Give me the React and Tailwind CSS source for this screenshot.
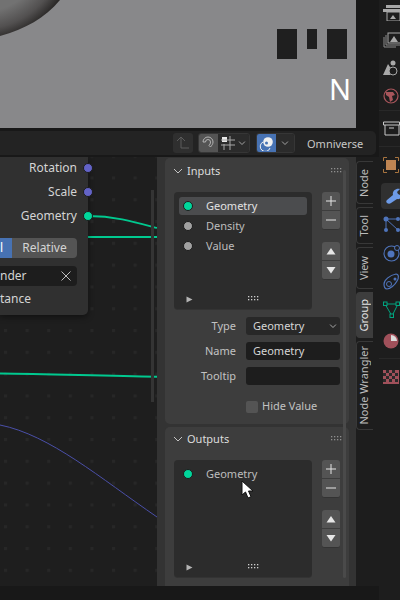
import React from 'react';

const font = { fontFamily: '"Noto Sans", sans-serif' };

// small up-chevron style arrow, used on panel headers and dropdowns
const Chevron = ({ className = '' }) => (
  <svg width="10" height="6" viewBox="0 0 10 6" className={className}>
    <path d="M1 1l4 4 4-4" fill="none" stroke="currentColor" strokeWidth="1" />
  </svg>
);

const Grip = ({ cols = 4, rows = 2, color = '#b5b5b5' }) => (
  <svg width={cols * 3} height={rows * 3} viewBox={`0 0 ${cols * 3} ${rows * 3}`}>
    {Array.from({ length: cols * rows }).map((_, i) => (
      <rect key={i} x={(i % cols) * 3} y={Math.floor(i / cols) * 3} width="1.3" height="1.3" fill={color} />
    ))}
  </svg>
);

const Dot = ({ color }) => (
  <div className="w-[8px] h-[8px] rounded-full border border-[#1c1c1c] shrink-0 box-content" style={{ background: color }} />
);

const ListRow = ({ color, label, active }) => (
  <div className={`flex items-center h-[18px] pl-[4px] rounded-[3px] ${active ? 'bg-[#4b4c4e] text-[#e2e2e2]' : 'text-[#bdbdbd]'}`}>
    <Dot color={color} />
    <span className="ml-[13px] pb-[2px]">{label}</span>
  </div>
);

const SideButtons = () => (
  <div className="flex flex-col w-[18px] ml-[10px]">
    <div className="h-[18px] bg-[#545454] rounded-t-[3px] flex items-center justify-center mb-[1px]">
      <svg width="10" height="10" viewBox="0 0 10 10"><path d="M5 0v10M0 5h10" stroke="#e6e6e6" /></svg>
    </div>
    <div className="h-[19px] bg-[#545454] rounded-b-[3px] flex items-center justify-center border-b border-[#333]">
      <svg width="10" height="10" viewBox="0 0 10 10"><path d="M0 5h10" stroke="#e6e6e6" /></svg>
    </div>
    <div className="h-[18px] bg-[#545454] rounded-t-[3px] flex items-center justify-center mt-[12px] mb-[1px]">
      <svg width="10" height="7" viewBox="0 0 10 7"><path d="M5 0l4.500 6.500h-9z" fill="#e6e6e6" /></svg>
    </div>
    <div className="h-[19px] bg-[#545454] rounded-b-[3px] flex items-center justify-center border-b border-[#333]">
      <svg width="10" height="7" viewBox="0 0 10 7"><path d="M5 6.500l4.500-6.500h-9z" fill="#e6e6e6" /></svg>
    </div>
  </div>
);

const ListBox = ({ children }) => (
  <div className="flex">
    <div className="w-[138px] h-[118px] bg-[#2c2c2c] rounded-[4px] border-b border-[#333] px-[5px] pt-[5px] flex flex-col relative">
      <div className="flex-1 flex flex-col gap-[2px]">{children}</div>
      <div className="flex items-center h-[14px] mb-[3px] pl-[7px]">
        <svg width="7" height="7" viewBox="0 0 7 7"><path d="M0.500 0.500v6l6-3z" fill="#b4b4b4" /></svg>
        <div className="ml-[55px]"><Grip color="#cfcfcf" /></div>
      </div>
    </div>
    <SideButtons />
  </div>
);

const PanelHead = ({ label, h = 26 }) => (
  <div className="flex items-center pl-[8px] pr-[6px] text-[#dcdcdc]" style={{ height: h }}>
    <Chevron className="text-[#c4c4c4]" />
    <span className="ml-[4px] flex-1 pb-[2px]">{label}</span>
    <Grip cols={4} rows={2} color="#8f8f8f" />
  </div>
);

const FieldRow = ({ label, value, bg = 'bg-[#1d1d1d]', arrow }) => (
  <div className="flex items-center h-[18px]">
    <div className="w-[71px] text-right text-[#c2c2c2] pb-[2px]">{label}</div>
    <div className={`ml-[10px] w-[94px] h-[18px] rounded-[3px] ${bg} flex items-center pl-[7px] pr-[2px] text-[#d6d6d6]`}>
      <span className="flex-1 pb-[2px]">{value}</span>
      {arrow && <Chevron className="text-[#d0d0d0] scale-75" />}
    </div>
  </div>
);

const Tab = ({ label, h, active }) => (
  <div
    className={`w-[17px] flex items-center justify-center pr-[3px] rounded-l-[4px] border border-r-0 ${active ? 'bg-[#3d3d3d] border-[#3d3d3d] text-[#e4e4e4]' : 'bg-[#1d1d1d] border-[#383838] text-[#bcbcbc]'}`}
    style={{ height: h }}
  >
    <span className="[writing-mode:vertical-rl] rotate-180 whitespace-nowrap">{label}</span>
  </div>
);

const NodeEditorCanvas = () => (
  <div className="relative flex-1 bg-[#1e1e1e] overflow-hidden">
    <svg width="157" height="429" viewBox="0 157 157 429" className="absolute inset-0">
      <defs>
        <pattern id="grid" x="4" y="2" width="21.6" height="21.8" patternUnits="userSpaceOnUse">
          <rect width="3" height="3" fill="#272727" />
        </pattern>
      </defs>
      <rect x="0" y="157" width="157" height="429" fill="url(#grid)" />
      <path d="M88 216C115 216 135 222 157 228" fill="none" stroke="#00c98f" strokeWidth="1.800" />
      <path d="M88 237H157" fill="none" stroke="#00c98f" strokeWidth="1.800" />
      <path d="M0 373.500C50 374 100 376 157 376.800" fill="none" stroke="#00c98f" strokeWidth="2" />
      <path d="M0 425C50 435 100 478 157 517" fill="none" stroke="#4a4fa8" strokeWidth="1" />
      <rect x="151" y="190" width="3" height="212" fill="#343434" />
    </svg>

    {/* node sits over the canvas */}
    <div className="absolute left-0 top-0 w-[88px] h-[158px] bg-[#303030] rounded-br-[5px] text-[12px] text-[#d4d4d4] shadow-[0_2px_6px_rgba(0,0,0,0.45)]">
      <div className="absolute right-[11px] top-[3px] leading-[16px]">Rotation</div>
      <div className="absolute right-[11px] top-[27px] leading-[16px]">Scale</div>
      <div className="absolute right-[11px] top-[51px] leading-[16px]">Geometry</div>
      <div className="absolute left-[0px] top-[81px] flex h-[20px] w-[77px] rounded-r-[4px] overflow-hidden">
        <div className="w-[12px] bg-[#4772b3] text-white flex items-center">l</div>
        <div className="flex-1 bg-[#545454] flex items-center justify-center">Relative</div>
      </div>
      <div className="absolute left-0 top-[109px] w-[77px] h-[20px] bg-[#1d1d1d] rounded-r-[4px] flex items-center justify-between pr-[6px]">
        <span>nder</span>
        <svg width="10" height="10" viewBox="0 0 10 10"><path d="M0.500 0.500l9 9M9.500 0.500l-9 9" stroke="#bdbdbd" /></svg>
      </div>
      <div className="absolute left-0 top-[134px] leading-[16px]">tance</div>
    </div>
    <div className="absolute left-[83px] top-[6px] w-[8px] h-[8px] rounded-full bg-[#6363c7] border border-[#1c1c1c] box-content" />
    <div className="absolute left-[83px] top-[30px] w-[8px] h-[8px] rounded-full bg-[#6363c7] border border-[#1c1c1c] box-content" />
    <div className="absolute left-[83px] top-[54px] w-[8px] h-[8px] rounded-full bg-[#00d69b] border border-[#1c1c1c] box-content" />

    {/* cursor is drawn over the sidebar, see App */}
  </div>
);

const Sidebar = () => (
  <div className="w-[199px] flex bg-[#333333]">
    <div className="w-[192px] pl-[8px] flex flex-col gap-[3px] pt-[1px]">
      <div className="w-[184px] h-[266px] bg-[#3d3d3d] rounded-[5px] flex flex-col">
        <PanelHead label="Inputs" />
        <div className="pl-[9px] pt-[8px]">
          <ListBox>
            <ListRow color="#00d69b" label="Geometry" active />
            <ListRow color="#a1a1a1" label="Density" />
            <ListRow color="#a1a1a1" label="Value" />
          </ListBox>
        </div>
        <div className="flex flex-col gap-[7px] pt-[7px]">
          <FieldRow label="Type" value="Geometry" bg="bg-[#282828]" arrow />
          <FieldRow label="Name" value="Geometry" />
          <FieldRow label="Tooltip" value="" />
        </div>
        <div className="flex items-center pl-[81px] pt-[15px] text-[#c2c2c2]">
          <div className="w-[12px] h-[12px] bg-[#545454] rounded-[2px]" />
          <span className="ml-[4px] pb-[2px]">Hide Value</span>
        </div>
      </div>
      <div className="w-[184px] h-[159px] bg-[#3d3d3d] rounded-t-[5px] flex flex-col">
        <PanelHead label="Outputs" h={24} />
        <div className="pl-[9px] pt-[9px]">
          <ListBox>
            <ListRow color="#00d69b" label="Geometry" />
          </ListBox>
        </div>
      </div>
    </div>
    <div className="w-[3px] ml-[-6px] mr-[6px] mt-[13px] h-[408px] bg-[#4a4a4a] rounded-[2px] shrink-0" />
  </div>
);

const Tabs = () => (
  <div className="w-[23px] bg-[#1d1d1d] flex flex-col gap-[3px] pt-[4px] overflow-hidden">
    <Tab label="Node" h={43} />
    <Tab label="Tool" h={37} />
    <Tab label="View" h={42} />
    <Tab label="Group" h={46} active />
    <Tab label="Node Wrangler" h={89} />
  </div>
);

const HeaderBar = () => (
  <div className="h-[24px] bg-[#232323] rounded-r-[5px] flex items-center pl-[173px] text-[#c8c8c8]">
    <div className="w-[20px] h-[20px] bg-[#2f2f2f] rounded-[3px] flex items-center justify-center">
      <svg width="14" height="14" viewBox="0 0 14 14"><path d="M1 5l4-4 4 4M5 1v11h8" fill="none" stroke="#5c5c5c" /></svg>
    </div>
    <div className="ml-[5px] flex h-[20px] w-[52px] rounded-[3px] overflow-hidden border border-[#363636]">
      <div className="w-[19px] bg-[#545454] flex items-center justify-center">
        <svg width="15" height="15" viewBox="0 0 15 15"><path d="M2 6a5 5 0 0 1 10 0c0 2-1 3-2.500 5L8 9.500c1-1 1.500-2 1.500-3.500a2.500 2.500 0 0 0-5 0L2 6z" fill="none" stroke="#b5b5b5" /></svg>
      </div>
      <div className="flex-1 bg-[#2b2b2b] flex items-center pl-[3px]">
        <svg width="14" height="14" viewBox="0 0 14 14">
          <rect x="1" y="1" width="5" height="5" fill="#e8e8e8" />
          <path d="M9 0v14M3 8v6M0 9h14M0 4h14" stroke="#a8a8a8" fill="none" />
        </svg>
        <Chevron className="ml-[2px] text-[#c8c8c8] scale-75" />
      </div>
    </div>
    <div className="ml-[6px] flex h-[20px] w-[39px] rounded-[3px] overflow-hidden border border-[#363636]">
      <div className="w-[19px] bg-[#4772b3] flex items-center justify-center">
        <svg width="15" height="15" viewBox="0 0 15 15">
          <circle cx="9" cy="6" r="4.800" fill="#f0f0f0" />
          <circle cx="7.500" cy="7" r="1.500" fill="#4772b3" />
          <path d="M4 6a5 5 0 1 0 7 6" fill="none" stroke="#f0f0f0" />
        </svg>
      </div>
      <div className="flex-1 bg-[#2b2b2b] flex items-center justify-center">
        <Chevron className="text-[#c8c8c8] scale-75" />
      </div>
    </div>
    <span className="ml-[12px]">Omniverse</span>
  </div>
);

const Viewport = () => (
  <div className="relative w-[356px] h-[128px] bg-[#88888a] overflow-hidden text-white">
    <svg width="80" height="50" viewBox="0 0 80 50" className="absolute left-0 top-0">
      <defs>
        <radialGradient id="ball" cx="0" cy="0" r="1" gradientUnits="userSpaceOnUse" gradientTransform="translate(-20 -55) scale(96)">
          <stop offset="0.7" stopColor="#727272" />
          <stop offset="0.88" stopColor="#525050" />
          <stop offset="1" stopColor="#2b2928" />
        </radialGradient>
      </defs>
      <path d="M0 36C25 29 45 18 60 0H0z" fill="url(#ball)" />
    </svg>
    <div className="absolute left-[277px] top-[29px] w-[20px] h-[30px] bg-[#1f1f1f]" />
    <div className="absolute left-[307px] top-[29px] w-[10px] h-[20px] bg-[#1f1f1f]" />
    <div className="absolute left-[327px] top-[29px] w-[20px] h-[30px] bg-[#1f1f1f]" />
    <div className="absolute left-[329px] top-[72px] text-[29px] leading-[34px]">N</div>
  </div>
);

const Icon = ({ h, active, sep, children }) => (
  <div className={`flex items-center pl-[4px] shrink-0 ${active ? 'bg-[#303030] rounded-l-[4px] ml-[2px] pl-[2px]' : ''} ${sep ? 'border-b border-[#282828]' : ''}`} style={{ height: h }}>
    {children}
  </div>
);

const PropertyIcons = () => (
  <div className="w-[21px] bg-[#1d1d1d] overflow-hidden flex flex-col">
    <Icon h={26}>
      <svg width="17" height="16" viewBox="0 0 17 16" className="shrink-0">
        <path d="M3 0h14v3H3zM0 4h17v3H0z" fill="#a8a8a8" />
        <rect x="4" y="7" width="13" height="9" fill="none" stroke="#a8a8a8" />
        <path d="M7 14l3-4 3 4z" fill="#a8a8a8" />
      </svg>
    </Icon>
    <Icon h={28}>
      <svg width="17" height="16" viewBox="0 0 17 16" className="shrink-0">
        <path d="M1 5v10h12M3 3v10h14" fill="none" stroke="#8c8c8c" />
        <rect x="5" y="1" width="13" height="10" fill="none" stroke="#a8a8a8" />
        <path d="M7 10l4-6 4 6z" fill="#a8a8a8" />
      </svg>
    </Icon>
    <Icon h={28}>
      <svg width="17" height="16" viewBox="0 0 17 16" className="shrink-0">
        <path d="M0 15l5-11 4 6-2 5z" fill="#a8a8a8" />
        <circle cx="10" cy="3" r="2.500" fill="#a8a8a8" />
        <circle cx="10" cy="11" r="4" fill="#1d1d1d" stroke="#a8a8a8" />
      </svg>
    </Icon>
    <Icon h={29} sep>
      <svg width="17" height="16" viewBox="0 0 17 16" className="shrink-0">
        <circle cx="8" cy="8" r="7" fill="none" stroke="#a8555b" strokeWidth="1.200" />
        <path d="M3 4h7l2 3-3 1 1 4-3 2-1-5-3-2z" fill="#a8555b" />
      </svg>
    </Icon>
    <Icon h={36} sep>
      <svg width="17" height="15" viewBox="0 0 17 15" className="shrink-0">
        <path d="M0.500 1h16v3h-16zM2 4v10h14V4M6 7h5" fill="none" stroke="#c8c8c8" />
      </svg>
    </Icon>
    <Icon h={36}>
      <svg width="16" height="16" viewBox="0 0 16 16" className="shrink-0">
        <path d="M0.500 4V0.500H4M12 0.500h3.500V4M15.500 12v3.500H12M4 15.500H0.500V12" fill="none" stroke="#a8743f" />
        <rect x="3" y="3" width="10" height="10" fill="#c08552" />
      </svg>
    </Icon>
    <Icon h={26} active>
      <svg width="18" height="18" viewBox="0 0 18 18" className="shrink-0">
        <path d="M2 16c-1-1-1-2 0-3l6-5c-1-3 2-7 7-6l-3 3 1 2 2 1 3-3c1 4-3 8-6 7l-6 4c-1 1-3 1-4 0z" fill="#6d9be8" />
      </svg>
    </Icon>
    <Icon h={30}>
      <svg width="17" height="17" viewBox="0 0 17 17" className="shrink-0">
        <circle cx="3" cy="3" r="2.500" fill="#4f74bb" />
        <circle cx="3" cy="14" r="2" fill="#4f74bb" />
        <circle cx="15" cy="3" r="2" fill="#4f74bb" />
        <circle cx="15" cy="14" r="2" fill="#4f74bb" />
        <path d="M3 3v11M3 3h12M3 3l12 11" stroke="#4f74bb" fill="none" />
      </svg>
    </Icon>
    <Icon h={28}>
      <svg width="17" height="17" viewBox="0 0 17 17" className="shrink-0">
        <circle cx="8.500" cy="8.500" r="7.500" fill="none" stroke="#4f74bb" strokeWidth="1.100" />
        <circle cx="8" cy="9" r="3.500" fill="#4f74bb" />
        <circle cx="14" cy="3" r="2.500" fill="#1d1d1d" stroke="#4f74bb" />
      </svg>
    </Icon>
    <Icon h={29}>
      <svg width="17" height="17" viewBox="0 0 17 17" className="shrink-0">
        <path d="M1 11c0-4 6-9 12-10 3 0 3 4 1 7-2 4-7 8-10 8-2 0-3-2-3-5z" fill="none" stroke="#4f74bb" strokeWidth="1.200" />
        <circle cx="6" cy="11" r="2.500" fill="none" stroke="#4f74bb" />
        <circle cx="12" cy="6" r="1.500" fill="#4f74bb" />
      </svg>
    </Icon>
    <Icon h={27}>
      <svg width="17" height="17" viewBox="0 0 17 17" className="shrink-0">
        <path d="M2 3h13L9 15z" fill="none" stroke="#00a580" />
        <rect x="0.500" y="1" width="3.500" height="3.500" fill="#1d1d1d" stroke="#00a580" />
        <rect x="13" y="1" width="3.500" height="3.500" fill="#1d1d1d" stroke="#00a580" />
        <rect x="7" y="13" width="3.500" height="3.500" fill="#1d1d1d" stroke="#00a580" />
      </svg>
    </Icon>
    <Icon h={36} sep>
      <svg width="16" height="16" viewBox="0 0 16 16" className="shrink-0">
        <circle cx="8" cy="8" r="7.500" fill="#a0505a" />
        <path d="M8 2a6 6 0 0 1 6 6H8z" fill="#dcdcdc" />
      </svg>
    </Icon>
    <Icon h={36}>
      <svg width="16" height="14" viewBox="0 0 16 14" className="shrink-0">
        <rect width="16" height="14" fill="#a0505a" />
        <path d="M3 0h3v3H3zM9 0h3v3H9zM0 3h3v3H0zM6 3h3v3H6zM12 3h3v3h-3zM3 6h3v3H3zM9 6h3v3H9zM0 9h3v3H0zM6 9h3v3H6zM12 9h3v3h-3z" fill="#2a2a2a" />
      </svg>
    </Icon>
  </div>
);

export default function App() {
  return (
    <div className="relative w-[400px] h-[600px] bg-[#181818] overflow-hidden flex text-[11px] leading-none" style={font}>
      <div className="w-[379px] flex flex-col">
        <div className="h-[131px]"><Viewport /></div>
        <div className="w-[376px]"><HeaderBar /></div>
        <div className="h-[2px]" />
        <div className="h-[429px] flex">
          <NodeEditorCanvas />
          <Sidebar />
          <Tabs />
        </div>
      </div>
      <PropertyIcons />

      {/* mouse cursor */}
      <svg width="13" height="19" viewBox="0 0 13 19" className="absolute left-[241px] top-[480px]">
        <path d="M1 1v14l3.500-3 2.500 6 3-1.300-2.500-5.700h4.500z" fill="#fff" stroke="#111" strokeWidth="1" />
      </svg>
    </div>
  );
}
